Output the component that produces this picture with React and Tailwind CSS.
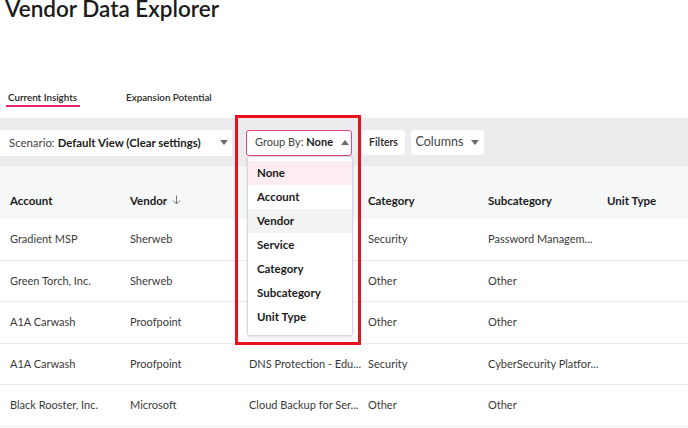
import React from "react";

const rows = [
  ["Gradient MSP", "Sherweb", "", "Security", "Password Managem..."],
  ["Green Torch, Inc.", "Sherweb", "", "Other", "Other"],
  ["A1A Carwash", "Proofpoint", "", "Other", "Other"],
  ["A1A Carwash", "Proofpoint", "DNS Protection - Edu...", "Security", "CyberSecurity Platfor..."],
  ["Black Rooster, Inc.", "Microsoft", "Cloud Backup for Ser...", "Other", "Other"],
];

const groupOptions = ["None", "Account", "Vendor", "Service", "Category", "Subcategory", "Unit Type"];

const Caret = ({ up }) => (
  <svg width="8" height="5" viewBox="0 0 8 5" className="shrink-0">
    <path d={up ? "M0 5 L4 0 L8 5 Z" : "M0 0 L8 0 L4 5 Z"} fill="#6b6b6b" />
  </svg>
);

export default function App() {
  return (
    <div className="relative h-[428px] w-[688px] overflow-hidden bg-white text-[#222]" style={{ fontFamily: "Lato, 'Liberation Sans', sans-serif" }}>
      <h1 className="mt-[-6px] whitespace-nowrap pl-[5px] text-[22.5px] font-semibold leading-[30px] text-[#1b1b1b]">Vendor Data Explorer</h1>

      <div className="mt-[64px] flex h-[30px] items-start gap-[46px] pl-[5px] text-[9.8px] font-semibold">
        <div className="flex h-full flex-col items-center">
          <span className="whitespace-nowrap px-[3px] pt-[2px] leading-[14px] text-[#1b1b1b]">Current Insights</span>
          <span className="mt-[1px] h-[2px] w-[74px] bg-[#e8247a]" />
        </div>
        <span className="whitespace-nowrap pt-[2px] leading-[14px] text-[#2a2a2a]">Expansion Potential</span>
      </div>

      <div className="flex h-[48px] items-center gap-[14px] bg-[#ececee] pt-[1px]">
        <div className="flex h-[26px] w-[232px] items-center justify-between bg-white pl-[9px] pr-[4px] text-[11.4px]">
          <span className="whitespace-nowrap text-[#444]">Scenario: <b className="font-bold text-[#1b1b1b]">Default View (Clear settings)</b></span>
          <Caret />
        </div>
        <div className="flex items-center gap-[10px]">
          <div className="flex h-[26px] w-[106px] items-center gap-[8px] rounded-[3px] border border-[#e8457f] bg-white pl-[8px] text-[11px]">
            <span className="whitespace-nowrap text-[#444]">Group By: <b className="font-bold text-[#1b1b1b]">None</b></span>
            <Caret up />
          </div>
          <div className="flex h-[25px] w-[43px] items-center justify-center rounded-[3px] bg-white text-[10.5px] font-semibold text-[#222]">Filters</div>
          <div className="-ml-[4px] flex h-[25px] w-[73px] items-center justify-center gap-[8px] rounded-[3px] bg-white text-[12.5px] text-[#444]">
            Columns <Caret />
          </div>
        </div>
      </div>

      <div className="grid h-[53px] grid-cols-[120px_119px_119px_120px_119px_91px] items-end bg-[#f6f7f7] pb-[10px] text-[11.5px] font-bold text-[#1b1b1b]">
        <span className="pl-[10px]">Account</span>
        <span className="flex items-center gap-[5px] pl-[10px]">
          Vendor
          <svg width="9" height="10" viewBox="0 0 9 10"><path d="M4.5 0.5 V9 M1 5.5 L4.5 9 L8 5.5" stroke="#777" strokeWidth="1" fill="none" /></svg>
        </span>
        <span className="pl-[10px]"></span>
        <span className="pl-[10px]">Category</span>
        <span className="pl-[10px]">Subcategory</span>
        <span className="pl-[10px]">Unit Type</span>
      </div>

      {rows.map((r, i) => (
        <div key={i} className="grid h-[41.5px] grid-cols-[120px_119px_119px_120px_119px_91px] items-center border-b border-[#ececec] text-[11px] text-[#3a3a3a]">
          {r.map((c, j) => (
            <span key={j} className="whitespace-nowrap pl-[10px]">{c}</span>
          ))}
          <span />
        </div>
      ))}

      <div className="absolute left-[247px] top-[156px] w-[106px] rounded-[3px] border border-[#d6d9dc] bg-white pb-[6px] pt-[4px] shadow-[0_1px_3px_rgba(0,0,0,0.12)]">
        {groupOptions.map((o) => (
          <div
            key={o}
            className={`flex h-[24px] items-center pl-[9px] text-[11.5px] font-bold text-[#1b1b1b] ${o === "None" ? "bg-[#fdedf2]" : o === "Vendor" ? "bg-[#f3f3f3]" : ""}`}
          >
            {o}
          </div>
        ))}
      </div>

      <div className="pointer-events-none absolute left-[235px] top-[115px] h-[230px] w-[126px] border-[3px] border-[#e8121f]" />
    </div>
  );
}
